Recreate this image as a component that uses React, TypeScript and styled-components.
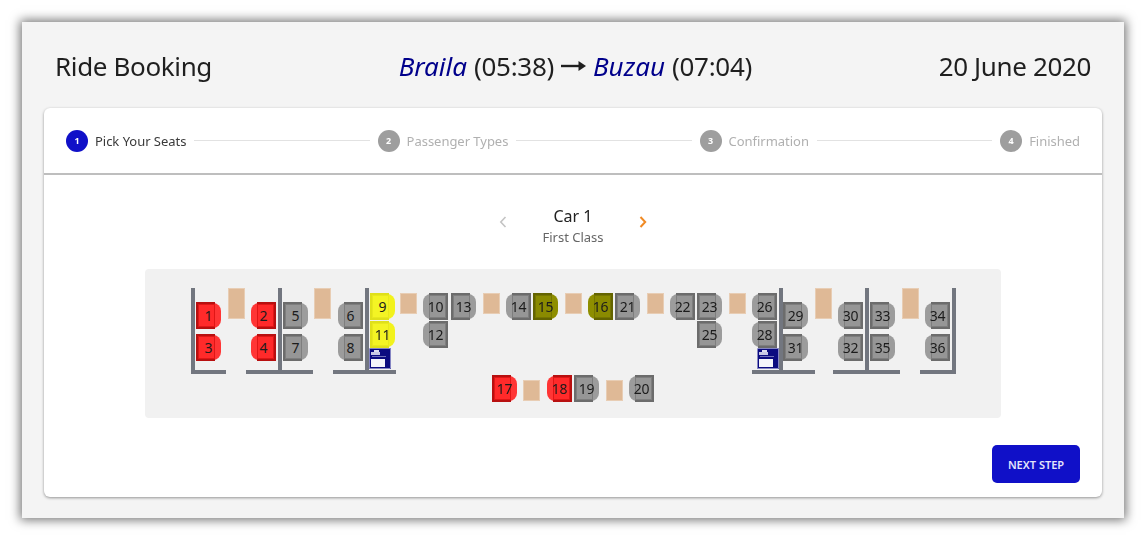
import React from 'react';
import styled, { createGlobalStyle, css } from 'styled-components';

type Tone = 'free' | 'taken' | 'picked' | 'held';
type Facing = 'left' | 'right';

type SeatItem = { n: number; x: number; y: number; facing: Facing; tone?: Tone };
type Box = { x: number; y: number; w: number; h: number };

// coordinates are relative to the seat map
const MAP_X = 145;
const MAP_Y = 269;

const seats: SeatItem[] = [
  { n: 1, x: 196, y: 302, facing: 'right', tone: 'taken' },
  { n: 3, x: 196, y: 334, facing: 'right', tone: 'taken' },
  { n: 2, x: 251, y: 302, facing: 'left', tone: 'taken' },
  { n: 4, x: 251, y: 334, facing: 'left', tone: 'taken' },
  { n: 5, x: 283, y: 302, facing: 'right' },
  { n: 7, x: 283, y: 334, facing: 'right' },
  { n: 6, x: 338, y: 302, facing: 'left' },
  { n: 8, x: 338, y: 334, facing: 'left' },
  { n: 9, x: 370, y: 293, facing: 'right', tone: 'picked' },
  { n: 11, x: 370, y: 321, facing: 'right', tone: 'picked' },
  { n: 10, x: 423, y: 293, facing: 'left' },
  { n: 13, x: 451, y: 293, facing: 'right' },
  { n: 12, x: 423, y: 321, facing: 'left' },
  { n: 14, x: 506, y: 293, facing: 'left' },
  { n: 15, x: 533, y: 293, facing: 'right', tone: 'held' },
  { n: 16, x: 588, y: 293, facing: 'left', tone: 'held' },
  { n: 21, x: 615, y: 293, facing: 'right' },
  { n: 22, x: 670, y: 293, facing: 'left' },
  { n: 23, x: 697, y: 293, facing: 'right' },
  { n: 25, x: 697, y: 321, facing: 'right' },
  { n: 26, x: 752, y: 293, facing: 'left' },
  { n: 28, x: 752, y: 321, facing: 'left' },
  { n: 29, x: 783, y: 302, facing: 'right' },
  { n: 31, x: 783, y: 334, facing: 'right' },
  { n: 30, x: 838, y: 302, facing: 'left' },
  { n: 32, x: 838, y: 334, facing: 'left' },
  { n: 33, x: 870, y: 302, facing: 'right' },
  { n: 35, x: 870, y: 334, facing: 'right' },
  { n: 34, x: 925, y: 302, facing: 'left' },
  { n: 36, x: 925, y: 334, facing: 'left' },
  { n: 17, x: 492, y: 375, facing: 'right', tone: 'taken' },
  { n: 18, x: 547, y: 375, facing: 'left', tone: 'taken' },
  { n: 19, x: 574, y: 375, facing: 'right' },
  { n: 20, x: 629, y: 375, facing: 'left' },
];

const tables: Box[] = [
  { x: 228, y: 288, w: 17, h: 31 },
  { x: 314, y: 288, w: 17, h: 31 },
  { x: 400, y: 293, w: 17, h: 21 },
  { x: 483, y: 293, w: 17, h: 21 },
  { x: 565, y: 293, w: 17, h: 21 },
  { x: 647, y: 293, w: 17, h: 21 },
  { x: 729, y: 293, w: 17, h: 21 },
  { x: 815, y: 288, w: 17, h: 31 },
  { x: 902, y: 288, w: 17, h: 31 },
  { x: 523, y: 380, w: 17, h: 21 },
  { x: 606, y: 380, w: 17, h: 21 },
];

const walls: Box[] = [
  { x: 191, y: 288, w: 4, h: 86 },
  { x: 191, y: 370, w: 35, h: 4 },
  { x: 278, y: 288, w: 4, h: 86 },
  { x: 246, y: 370, w: 67, h: 4 },
  { x: 365, y: 288, w: 4, h: 86 },
  { x: 333, y: 370, w: 63, h: 4 },
  { x: 779, y: 288, w: 4, h: 86 },
  { x: 752, y: 370, w: 63, h: 4 },
  { x: 865, y: 288, w: 4, h: 86 },
  { x: 833, y: 370, w: 67, h: 4 },
  { x: 952, y: 288, w: 4, h: 86 },
  { x: 920, y: 370, w: 35, h: 4 },
];

const toilets = [
  { x: 369, y: 348 },
  { x: 757, y: 348 },
];

const steps = ['Pick Your Seats', 'Passenger Types', 'Confirmation', 'Finished'];

const place = (b: { x: number; y: number; w?: number; h?: number }) => ({
  left: b.x - MAP_X,
  top: b.y - MAP_Y,
  width: b.w,
  height: b.h,
});

const App: React.FC = () => (
  <>
    <GlobalStyle />
    <Page>
      <Window>
        <Header>
          <Title>Ride Booking</Title>
          <Route>
            <City>Braila</City>
            <span>(05:38)</span>
            <svg width="25" height="12" viewBox="0 0 25 12">
              <path d="M0 6 H21" stroke="#1f1f1f" strokeWidth="2.4" />
              <path d="M17.5 1 L25 6 L17.5 11 Z" fill="#1f1f1f" />
            </svg>
            <City>Buzau</City>
            <span>(07:04)</span>
          </Route>
          <Title>20 June 2020</Title>
        </Header>
        <Card>
          <Stepper>
            {steps.map((label, index) => (
              <React.Fragment key={label}>
                {index > 0 && <StepLine />}
                <Step>
                  <StepDot active={index === 0}>{index + 1}</StepDot>
                  <StepLabel active={index === 0}>{label}</StepLabel>
                </Step>
              </React.Fragment>
            ))}
          </Stepper>
          <Body>
            <CarSwitch>
              <CarArrow>
                <svg width="10" height="14" viewBox="0 0 10 14" fill="none">
                  <path d="M7.5 2 L2.8 7 L7.5 12" stroke="#c4c4c4" strokeWidth="1.6" />
                </svg>
              </CarArrow>
              <CarInfo>
                <CarName>Car 1</CarName>
                <CarClass>First Class</CarClass>
              </CarInfo>
              <CarArrow>
                <svg width="10" height="14" viewBox="0 0 10 14" fill="none">
                  <path d="M2.5 2 L7.2 7 L2.5 12" stroke="#f08a24" strokeWidth="2" />
                </svg>
              </CarArrow>
            </CarSwitch>
            <SeatMap>
              {tables.map((t) => (
                <Table key={`${t.x}-${t.y}`} style={place(t)} />
              ))}
              {walls.map((w) => (
                <Wall key={`${w.x}-${w.y}`} style={place(w)} />
              ))}
              {seats.map((s) => (
                <Seat key={s.n} facing={s.facing} tone={s.tone ?? 'free'} style={place(s)}>
                  <SeatFrame facing={s.facing} tone={s.tone ?? 'free'} />
                  <SeatNumber>{s.n}</SeatNumber>
                </Seat>
              ))}
              {toilets.map((t) => (
                <Toilet key={t.x} style={place(t)}>
                  <svg width="22" height="21" viewBox="0 0 22 21">
                    <rect width="22" height="21" fill="#0b0b80" />
                    <rect x="0.5" y="0.5" width="21" height="20" fill="none" stroke="#b9b9e0" strokeWidth="0.7" />
                    <rect x="5" y="2" width="5" height="2" fill="#dcdcf0" />
                    <rect x="2" y="4" width="9" height="3" fill="#c8c8e6" />
                    <rect x="3" y="8" width="14" height="1" fill="#6f6fb8" />
                    <rect x="2" y="11" width="14" height="8" fill="#f4f4fb" />
                  </svg>
                </Toilet>
              ))}
            </SeatMap>
            <Actions>
              <NextButton>NEXT STEP</NextButton>
            </Actions>
          </Body>
        </Card>
      </Window>
    </Page>
  </>
);

const GlobalStyle = createGlobalStyle`
  html, body {
    margin: 0;
    padding: 0;
    background: #ffffff;
  }
  * {
    box-sizing: border-box;
  }
`;

const Page = styled.div`
  width: 1146px;
  height: 541px;
  padding: 22px;
  overflow: hidden;
  font-family: 'Noto Sans', 'Open Sans', sans-serif;
  filter: blur(0.35px);
`;

const Window = styled.div`
  width: 1102px;
  height: 496px;
  padding: 0 22px;
  background: #f4f4f4;
  box-shadow: 0 0 10px 2px rgba(0, 0, 0, 0.55);
`;

const Header = styled.div`
  height: 86px;
  padding: 2px 11px 0;
  display: flex;
  align-items: center;
  justify-content: space-between;
`;

const Title = styled.div`
  font-size: 26px;
  letter-spacing: -0.36px;
  color: #1f1f1f;
`;

const Route = styled.div`
  display: flex;
  align-items: center;
  gap: 7px;
  font-size: 26px;
  letter-spacing: -0.3px;
  color: #1f1f1f;
`;

const City = styled.span`
  font-style: italic;
  letter-spacing: 0;
  color: #00008b;
`;

const Card = styled.div`
  width: 1058px;
  height: 389px;
  background: #ffffff;
  border-radius: 6px;
  box-shadow: 0 1px 3px rgba(0, 0, 0, 0.4);
`;

const Stepper = styled.div`
  height: 67px;
  padding: 0 22px;
  display: flex;
  align-items: center;
  gap: 8px;
  border-bottom: 2px solid #bebebe;
`;

const Step = styled.div`
  display: flex;
  align-items: center;
  gap: 7px;
`;

const StepDot = styled.div<{ active: boolean }>`
  width: 22px;
  height: 22px;
  border-radius: 50%;
  display: flex;
  align-items: center;
  justify-content: center;
  font-size: 9px;
  font-weight: 700;
  color: #ffffff;
  background: ${({ active }) => (active ? '#1010c8' : '#9e9e9e')};
`;

const StepLabel = styled.div<{ active: boolean }>`
  font-size: 13px;
  letter-spacing: -0.03px;
  color: ${({ active }) => (active ? '#3a3a3a' : '#b0b0b0')};
`;

const StepLine = styled.div`
  flex: 1;
  height: 1px;
  background: #e2e2e2;
`;

const Body = styled.div`
  padding: 28px 22px 0;
`;

const CarSwitch = styled.div`
  height: 60px;
  display: flex;
  justify-content: center;
  align-items: flex-start;
  gap: 34px;
`;

const CarArrow = styled.div`
  width: 10px;
  height: 14px;
  margin-top: 9px;
`;

const CarInfo = styled.div`
  width: 62px;
  padding-top: 2px;
  display: flex;
  flex-direction: column;
  align-items: center;
  white-space: nowrap;
`;

const CarName = styled.div`
  font-size: 16px;
  line-height: 22px;
  color: #222222;
`;

const CarClass = styled.div`
  font-size: 13px;
  line-height: 21px;
  color: #666666;
`;

const SeatMap = styled.div`
  position: relative;
  width: 856px;
  height: 149px;
  margin: 6px 0 0 79px;
  background: #f1f1f1;
  border-radius: 4px;
`;

const Table = styled.div`
  position: absolute;
  background: #dfb996;
  border: 1px solid #e8cdb4;
`;

const Wall = styled.div`
  position: absolute;
  background: #72767f;
`;

const toneColors: Record<Tone, { body: string; frame: string; bevel: string; inner: string }> = {
  free: { body: '#9c9c9c', frame: '#6c6c6c', bevel: '#7e7e7e', inner: '#969696' },
  taken: { body: '#ff3535', frame: '#b81010', bevel: '#e01616', inner: '#ff2a2a' },
  picked: { body: '#f2f21c', frame: '#e0e01a', bevel: '#e8e81e', inner: '#f4f424' },
  held: { body: '#8e8e00', frame: '#646400', bevel: '#767600', inner: '#8a8a00' },
};

const Seat = styled.div<{ facing: Facing; tone: Tone }>`
  position: absolute;
  width: 25px;
  height: 27px;
  display: flex;
  align-items: center;
  justify-content: center;

  &::before {
    content: '';
    position: absolute;
    top: 1px;
    bottom: 1px;
    left: 0;
    right: 0;
    background: ${({ tone }) => toneColors[tone].body};
    border-radius: ${({ facing }) => (facing === 'right' ? '0 8px 8px 0' : '8px 0 0 8px')};
  }
`;

const SeatFrame = styled.div<{ facing: Facing; tone: Tone }>`
  position: absolute;
  top: 0;
  bottom: 0;
  width: 19px;
  background: ${({ tone }) => toneColors[tone].inner};
  border: 2px solid ${({ tone }) => toneColors[tone].frame};
  box-shadow: inset 0 0 0 1px ${({ tone }) => toneColors[tone].bevel};
  ${({ facing }) =>
    facing === 'right'
      ? css`
          left: 0;
          border-right: none;
        `
      : css`
          right: 0;
          border-left: none;
        `}
`;

const SeatNumber = styled.span`
  position: relative;
  font-size: 14px;
  letter-spacing: -0.2px;
  color: #1c1c1c;
`;

const Toilet = styled.div`
  position: absolute;
  width: 22px;
  height: 21px;
  line-height: 0;
`;

const Actions = styled.div`
  margin-top: 27px;
  display: flex;
  justify-content: flex-end;
`;

const NextButton = styled.button`
  width: 88px;
  height: 38px;
  padding: 0;
  border: none;
  border-radius: 5px;
  background: #1010c8;
  color: #e4e4fb;
  font-family: inherit;
  font-size: 11px;
  font-weight: 600;
`;

export default App;
